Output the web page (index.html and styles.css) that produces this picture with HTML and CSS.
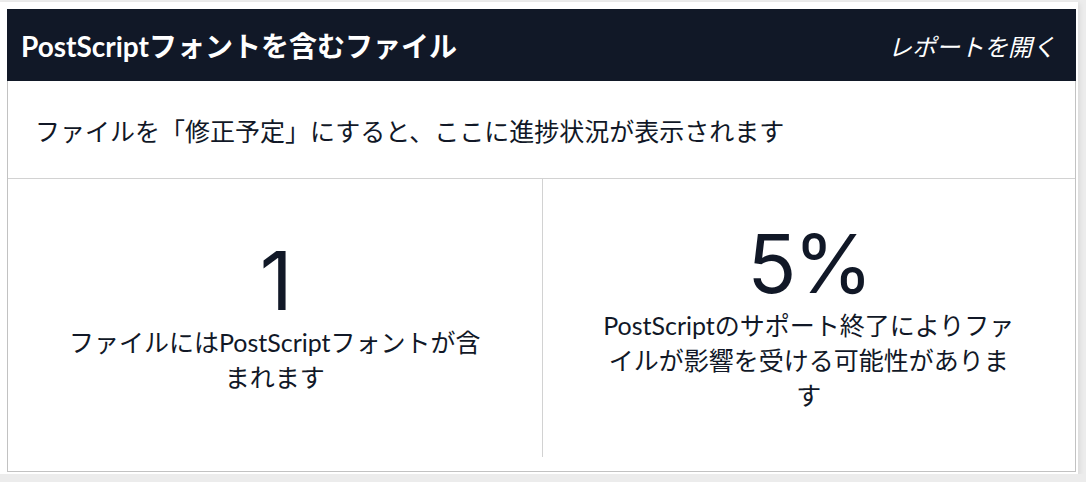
FILE: index.html
```html
<!DOCTYPE html>
<html lang="ja">
<head>
<meta charset="utf-8">
<link rel="stylesheet" href="styles.css">
</head>
<body>
<div class="frame">
  <section class="card">
    <header class="card-head">
      <h1 class="title">PostScriptフォントを含むファイル</h1>
      <a class="report-link">レポートを開く</a>
    </header>
    <div class="card-body">
      <p class="notice">ファイルを「修正予定」にすると、ここに進捗状況が表示されます</p>
      <div class="stats">
        <div class="stat">
          <div class="stat-value">1</div>
          <div class="stat-desc">ファイルにはPostScriptフォントが含まれます</div>
        </div>
        <div class="stat">
          <div class="stat-value">5%</div>
          <div class="stat-desc">PostScriptのサポート終了によりファイルが影響を受ける可能性があります</div>
        </div>
      </div>
    </div>
  </section>
</div>
</body>
</html>
```

FILE: styles.css
```css
html, body {
  margin: 0;
  padding: 0;
}
body {
  background: #ececec;
  font-family: "Lato", "Noto Sans CJK JP", sans-serif;
  color: #111827;
}
.frame {
  margin-top: 2px;
  width: 1078px;
  height: 472px;
  box-sizing: border-box;
  padding: 7px 0 0 7px;
  background: #ffffff;
  box-shadow: 2px 2px 5px rgba(0, 0, 0, 0.08);
}
.card {
  width: 1069px;
  height: 463px;
  display: flex;
  flex-direction: column;
}
.card-head {
  height: 72px;
  flex: none;
  background: #111827;
  color: #ffffff;
  display: flex;
  align-items: center;
  justify-content: space-between;
  padding: 0 20px 0 14px;
}
.title {
  margin: 0;
  font-size: 28px;
  font-weight: 700;
}
.report-link {
  font-size: 24px;
  font-style: italic;
  font-weight: 400;
  color: #ffffff;
}
.card-body {
  flex: 1;
  display: flex;
  flex-direction: column;
  border: 1px solid #c2c2c2;
  border-top: none;
}
.notice {
  margin: 0;
  height: 97px;
  flex: none;
  display: flex;
  align-items: center;
  padding-left: 27px;
  font-size: 25px;
  font-weight: 400;
  border-bottom: 1px solid #d2d2d2;
}
.stats {
  flex: 1;
  display: grid;
  grid-template-columns: 1fr 1fr;
  padding-bottom: 14px;
}
.stat {
  display: flex;
  flex-direction: column;
  align-items: center;
  justify-content: center;
  text-align: center;
}
.stat + .stat {
  border-left: 1px solid #d2d2d2;
}
.stat-value {
  font-family: "Inter", "Lato", sans-serif;
  font-size: 81px;
  line-height: 80px;
  font-weight: 400;
  letter-spacing: -3px;
}
.stat-desc {
  margin-top: 4px;
  width: 416px;
  font-size: 25px;
  line-height: 35px;
}
```
